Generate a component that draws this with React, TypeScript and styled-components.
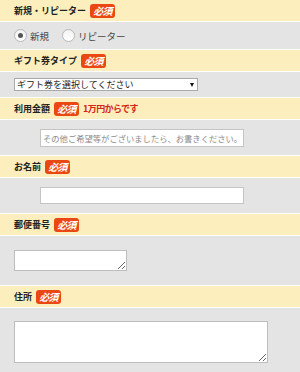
import React from "react";
import styled, { createGlobalStyle } from "styled-components";

const Global = createGlobalStyle`
  html, body { margin: 0; padding: 0; background: #e4e4e4; }
  body { font-family: "Noto Sans CJK JP", "Noto Sans", sans-serif; color: #222; }
  * { box-sizing: border-box; }
`;

const Form = styled.div`
  width: 300px;
  display: flex;
  flex-direction: column;
`;

const Title = styled.div`
  height: 22px;
  background: #fdefbd;
  border-bottom: 1px solid #ffffff;
  display: flex;
  align-items: center;
  gap: 4px;
  padding-left: 14px;
  font-size: 9px;
  font-weight: 700;
  color: #222;
  line-height: 1;
`;

const Badge = styled.span`
  display: inline-flex;
  align-items: center;
  justify-content: center;
  width: 25px;
  height: 14px;
  border-radius: 3px;
  background: #eb4712;
  color: #fff;
  font-size: 10px;
  font-weight: 700;
  font-style: italic;
  letter-spacing: -0.8px;
`;

const Note = styled.span`
  color: #d32416;
  font-size: 9px;
  font-weight: 700;
  letter-spacing: -0.6px;
`;

const Body = styled.div<{ $h: number; $pl: number }>`
  height: ${(p) => p.$h}px;
  background: #e4e4e4;
  border-bottom: 1px solid #ffffff;
  display: flex;
  align-items: center;
  padding-left: ${(p) => p.$pl}px;
`;

const RadioLabel = styled.label`
  display: inline-flex;
  align-items: center;
  gap: 3px;
  margin-right: 13px;
  font-size: 9.5px;
  color: #444;
`;

const Radio = styled.input`
  appearance: none;
  margin: 0;
  width: 13px;
  height: 13px;
  border-radius: 50%;
  border: 1px solid #b8b8b8;
  background: linear-gradient(#f2f2f2, #ffffff);
  position: relative;
  &:checked::after {
    content: "";
    position: absolute;
    left: 3px;
    top: 3px;
    width: 5px;
    height: 5px;
    border-radius: 50%;
    background: #555;
  }
`;

const SelectWrap = styled.div`
  position: relative;
  width: 184px;
  height: 13px;
  &::after {
    content: "";
    position: absolute;
    right: 4px;
    top: 4.5px;
    border-left: 2.5px solid transparent;
    border-right: 2.5px solid transparent;
    border-top: 4px solid #111;
    pointer-events: none;
  }
`;

const Select = styled.select`
  display: block;
  appearance: none;
  width: 100%;
  height: 13px;
  margin: 0;
  padding: 0 0 0 2px;
  border: 1px solid #a9a9a9;
  border-radius: 0;
  background: #fff;
  font-family: inherit;
  font-size: 9px;
  line-height: 11px;
  color: #222;
`;

const TextInput = styled.input<{ $h: number }>`
  display: block;
  width: 204px;
  height: ${(p) => p.$h}px;
  margin: 0;
  padding: 0 2px;
  border: 1px solid #c4c4c4;
  background: #fff;
  font-family: inherit;
  font-size: 8.3px;
  &::placeholder { color: #8a8a8a; }
`;

const TextArea = styled.textarea<{ $w: number; $h: number }>`
  display: block;
  width: ${(p) => p.$w}px;
  height: ${(p) => p.$h}px;
  margin: 0;
  border: 1px solid #bdbdbd;
  background: #fff;
  font-family: inherit;
  font-size: 9px;
  padding: 2px;
`;

export default function App() {
  return (
    <>
      <Global />
      <Form>
        <Title>
          新規・リピーター<Badge>必須</Badge>
        </Title>
        <Body $h={28} $pl={14}>
          <RadioLabel>
            <Radio type="radio" name="kind" defaultChecked />
            新規
          </RadioLabel>
          <RadioLabel>
            <Radio type="radio" name="kind" />
            リピーター
          </RadioLabel>
        </Body>

        <Title>
          ギフト券タイプ<Badge>必須</Badge>
        </Title>
        <Body $h={26} $pl={14}>
          <SelectWrap>
            <Select defaultValue="">
              <option value="">ギフト券を選択してください</option>
            </Select>
          </SelectWrap>
        </Body>

        <Title>
          利用金額<Badge>必須</Badge>
          <Note>1万円からです</Note>
        </Title>
        <Body $h={36} $pl={40}>
          <TextInput $h={18} placeholder="その他ご希望等がございましたら、お書きください。" />
        </Body>

        <Title>
          お名前<Badge>必須</Badge>
        </Title>
        <Body $h={36} $pl={40}>
          <TextInput $h={17} />
        </Body>

        <Title>
          郵便番号<Badge>必須</Badge>
        </Title>
        <Body $h={50} $pl={14}>
          <TextArea $w={113} $h={21} />
        </Body>

        <Title>
          住所<Badge>必須</Badge>
        </Title>
        <Body $h={69} $pl={14}>
          <TextArea $w={254} $h={42} />
        </Body>
      </Form>
    </>
  );
}
